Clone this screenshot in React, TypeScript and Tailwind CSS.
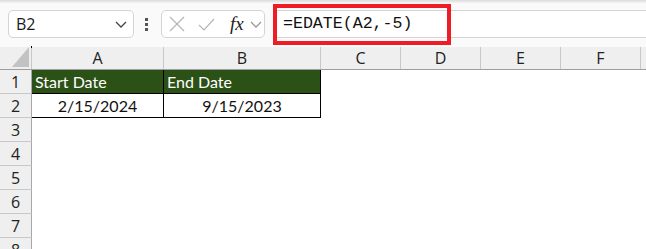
import React from 'react';

const cols = [
  { key: 'A', w: 'w-[132px]' },
  { key: 'B', w: 'w-[157px]' },
  { key: 'C', w: 'w-[80px]' },
  { key: 'D', w: 'w-[80px]' },
  { key: 'E', w: 'w-[80px]' },
  { key: 'F', w: 'w-[80px]' },
  { key: '', w: 'w-[80px]' },
];

const rows = [1, 2, 3, 4, 5, 6, 7, 8];

const data: Record<number, string[]> = {
  1: ['Start Date', 'End Date'],
  2: ['2/15/2024', '9/15/2023'],
};

const Chevron: React.FC<{ className?: string }> = ({ className = '' }) => (
  <svg className={className} width="12" height="7" viewBox="0 0 12 7" fill="none">
    <path d="M1 1 L6 6 L11 1" stroke="currentColor" strokeWidth="1.3" />
  </svg>
);

const Toolbar: React.FC = () => (
  <div className="relative h-[47px] bg-[#fafafa]">
    <div className="h-[3px] bg-gradient-to-b from-[#dcdcdc] to-[#f3f3f3]" />
    <div className="flex items-start pl-2 pt-[7px]">
      <div className="w-[126px] h-[28px] bg-white border border-[#d4d4d4] rounded-[5px] flex items-center justify-between pl-[7px] pr-[6px]">
        <span className="text-[16px] text-[#1a1a1a] font-['Open_Sans',sans-serif]">B2</span>
        <Chevron className="text-[#444]" />
      </div>
      <div className="ml-[11px] mt-[8px] flex flex-col gap-[2px]">
        <div className="w-[3px] h-[3px] bg-[#555]" />
        <div className="w-[3px] h-[3px] bg-[#555]" />
        <div className="w-[3px] h-[3px] bg-[#555]" />
      </div>
      <div className="ml-[13px] w-[104px] h-[28px] bg-white border border-[#d4d4d4] rounded-[5px] flex items-center pl-[7px]">
        <svg width="16" height="16" viewBox="0 0 16 16" fill="none">
          <path d="M1 1 L15 15 M15 1 L1 15" stroke="#b5b5b5" strokeWidth="1.2" />
        </svg>
        <svg className="ml-[13px]" width="17" height="13" viewBox="0 0 17 13" fill="none">
          <path d="M1 7 L6 12 L16 1" stroke="#b5b5b5" strokeWidth="1.2" />
        </svg>
        <span className="ml-[15px] text-[19px] leading-none italic text-[#222] font-['Liberation_Serif',serif] -mt-[2px]">fx</span>
        <Chevron className="ml-[6px] text-[#999]" />
      </div>
      <div className="ml-[8px] flex-1 h-[28px] bg-white border-y border-l border-[#d4d4d4] flex items-center pl-[9px]">
        <span className="text-[16.6px] text-[#111] font-['Liberation_Mono',monospace]">=EDATE(A2,-5)</span>
      </div>
    </div>
    <div className="absolute left-[273px] top-[4px] w-[178px] h-[41px] border-4 border-[#ee1c25]" />
  </div>
);

export default function App() {
  return (
    <div className="w-[646px] h-[249px] overflow-hidden bg-white">
      <Toolbar />
      <div className="flex h-[23px] bg-[#efefef] border-b border-[#9e9e9e]">
        <div className="w-[32px] shrink-0 border-r border-[#c8c8c8] relative">
          <div className="absolute left-[31px] -top-px w-px h-[2px] bg-black" />
          <svg className="absolute left-[12px] top-[0px]" width="17" height="20" viewBox="0 0 17 20">
            <polygon points="17,0 17,20 0,20" fill="#c2c2c2" />
          </svg>
        </div>
        {cols.map((c, i) => (
          <div
            key={i}
            className={`${c.w} shrink-0 border-r border-[#c8c8c8] flex items-center justify-center text-[16px] text-[#222] font-['Open_Sans',sans-serif]`}
          >
            {c.key}
          </div>
        ))}
      </div>
      {rows.map((r) => (
        <div key={r} className="flex h-[24px]">
          <div className="w-[32px] shrink-0 bg-[#efefef] border-r border-b border-r-[#a8a8a8] border-b-[#c8c8c8] flex items-center justify-center text-[16px] leading-none text-[#222] font-['Open_Sans',sans-serif]">
            {r}
          </div>
          {cols.map((c, i) => {
            const val = data[r]?.[i];
            const inTable = data[r] && i < 2;
            const header = r === 1 && i < 2;
            return (
              <div
                key={i}
                className={`${c.w} shrink-0 flex items-center text-[16px] font-['Lato',sans-serif] ${
                  inTable ? 'border-r border-b border-black' : ''
                } ${header ? 'bg-[#2b5117] text-white pl-[3px]' : 'justify-center text-[#111]'}`}
              >
                {val}
              </div>
            );
          })}
        </div>
      ))}
    </div>
  );
}
